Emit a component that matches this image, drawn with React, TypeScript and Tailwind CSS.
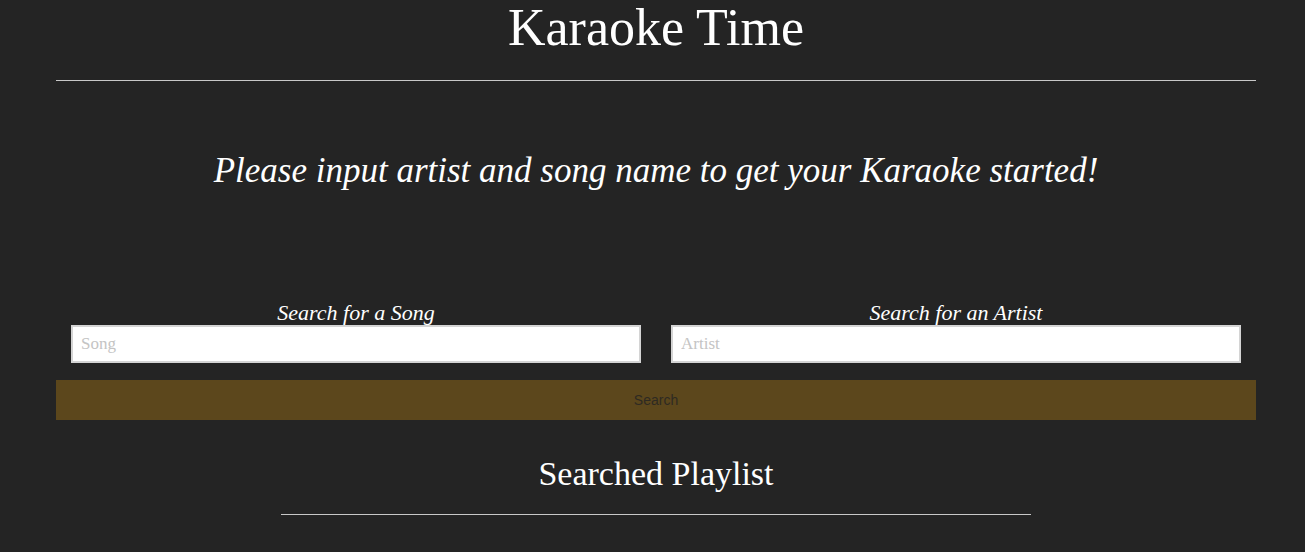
const serif = { fontFamily: '"Liberation Serif", "DejaVu Serif", serif' };

export default function App() {
  return (
    <div className="min-h-[552px] bg-[#242424] text-white" style={serif}>
      <div className="ml-[56px] w-[1200px]">
        <h1 className="pt-[2px] text-center text-[52px] leading-[52px]">Karaoke Time</h1>
        <hr className="mt-[26px] border-t border-[#c8c8c8]" />

        <p className="mt-[70px] text-center text-[35px] italic leading-[40px]">
          Please input artist and song name to get your Karaoke started!
        </p>

        <div className="mt-[110px] grid grid-cols-2">
          <label className="flex flex-col items-center px-[15px]">
            <span className="text-[22px] italic leading-[24px]">Search for a Song</span>
            <input
              placeholder="Song"
              className="h-[38px] w-full border-2 border-[#d4d4d4] bg-white px-[8px] text-[17px] text-black outline-none placeholder:text-[#c4c4c4]"
              style={serif}
            />
          </label>
          <label className="flex flex-col items-center px-[15px]">
            <span className="text-[22px] italic leading-[24px]">Search for an Artist</span>
            <input
              placeholder="Artist"
              className="h-[38px] w-full border-2 border-[#d4d4d4] bg-white px-[8px] text-[17px] text-black outline-none placeholder:text-[#c4c4c4]"
              style={serif}
            />
          </label>
        </div>

        <button
          className="mt-[17px] h-[40px] w-full bg-[#5c471c] text-[14px] text-[#2e2a22]"
          style={{ fontFamily: '"Liberation Sans", Arial, sans-serif' }}
        >
          Search
        </button>

        <h2 className="mt-[34px] text-center text-[34px] leading-[40px]">Searched Playlist</h2>
        <hr className="mx-auto mt-[20px] w-[750px] border-t border-[#c8c8c8]" />
      </div>
    </div>
  );
}
